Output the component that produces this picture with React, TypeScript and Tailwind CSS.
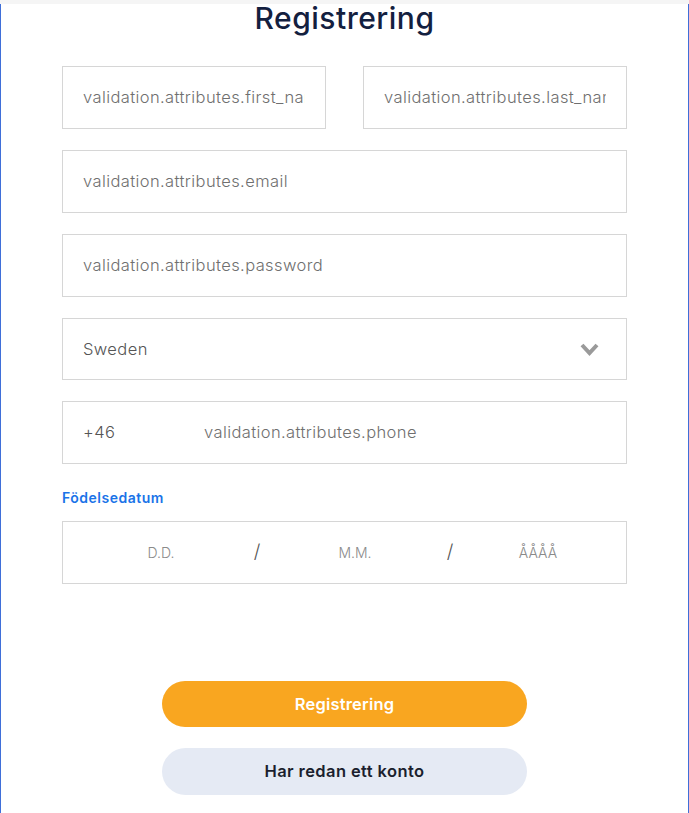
const font = { fontFamily: 'Inter, "Noto Sans", sans-serif' };

const Field = ({ placeholder }: { placeholder: string }) => (
  <div className="h-[63px] border border-[#d6d6d6] bg-white px-5 flex items-center overflow-hidden">
    <span className="text-[16.5px] tracking-[0.4px] font-light text-[#6f6f6f] whitespace-nowrap overflow-hidden">
      {placeholder}
    </span>
  </div>
);

export default function App() {
  return (
    <div className="min-h-[813px] bg-white" style={font}>
      <div className="h-1 bg-[#f5f5f5]" />
      <div className="min-h-[809px] border-x border-[#3f6fd9] px-[61px] pb-4">
        <h1 className="text-center text-[30px] leading-[28px] font-medium text-[#13203f] tracking-[0.5px]">
          Registrering
        </h1>

        <div className="mt-[34px] flex flex-col gap-[21px]">
          {/* name row */}
          <div className="grid grid-cols-2 gap-[37px]">
            <Field placeholder="validation.attributes.first_name" />
            <Field placeholder="validation.attributes.last_name" />
          </div>

          <Field placeholder="validation.attributes.email" />
          <Field placeholder="validation.attributes.password" />

          {/* country select */}
          <div className="h-[62px] border border-[#d6d6d6] px-5 flex items-center justify-between">
            <span className="text-[16.5px] tracking-[0.4px] font-light text-[#555]">Sweden</span>
            <svg width="19" height="13" viewBox="0 0 19 13" className="mr-[7px]">
              <polyline points="2,2 9.5,10 17,2" fill="none" stroke="#9a9a9a" strokeWidth="4" />
            </svg>
          </div>

          {/* phone */}
          <div className="h-[63px] border border-[#d6d6d6] px-5 flex items-center">
            <span className="w-[121px] text-[16.5px] tracking-[0.4px] font-light text-[#555]">+46</span>
            <span className="text-[16.5px] tracking-[0.4px] font-light text-[#6f6f6f]">validation.attributes.phone</span>
          </div>
        </div>

        {/* birth date */}
        <div className="mt-[25px] text-[14px] leading-[18px] font-semibold tracking-[0.5px] text-[#1a73e8]">
          Födelsedatum
        </div>
        <div className="mt-[14px] h-[63px] border border-[#d6d6d6] flex items-center pl-[49px] text-[14px] font-light text-[#8a8a8a]">
          <span className="w-[98px] text-center">D.D.</span>
          <span className="w-[94px] text-center text-[19px] text-[#555]">/</span>
          <span className="w-[102px] text-center">M.M.</span>
          <span className="w-[88px] text-center text-[19px] text-[#555]">/</span>
          <span className="w-[88px] text-center">ÅÅÅÅ</span>
        </div>

        {/* actions */}
        <div className="mt-[97px] flex flex-col items-center gap-[21px]">
          <button className="w-[365px] h-[46px] rounded-full bg-[#f9a620] text-white text-[16.5px] tracking-[0.2px] font-semibold">
            Registrering
          </button>
          <button className="w-[365px] h-[47px] rounded-full bg-[#e5eaf4] text-[#1b1f2e] text-[16.5px] tracking-[0.4px] font-semibold">
            Har redan ett konto
          </button>
        </div>
      </div>
    </div>
  );
}
